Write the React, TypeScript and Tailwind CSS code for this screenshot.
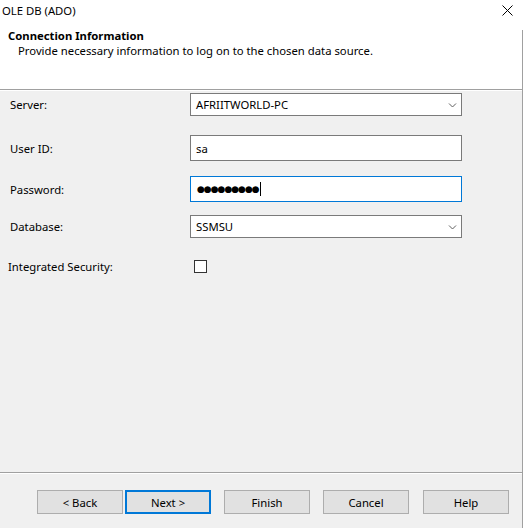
import React from 'react'

function Chevron() {
  return (
    <svg width="9" height="6" viewBox="0 0 9 6" className="mr-[4px]">
      <path d="M1 1.5 L4.5 5 L8 1.5" fill="none" stroke="#606060" strokeWidth="1" />
    </svg>
  )
}

function Combo({ value }: { value: string }) {
  return (
    <div className="w-[272px] h-[23px] bg-white border border-[#7a7a7a] flex items-center justify-between pl-[5px]">
      <span>{value}</span>
      <Chevron />
    </div>
  )
}

function Label({ text }: { text: string }) {
  return <div className="w-[190px] pl-[10px]">{text}</div>
}

export default function App() {
  const buttons = [
    { label: '< Back', cls: 'ml-[37px] border border-[#adadad]' },
    { label: 'Next >', cls: 'ml-[2px] border-2 border-[#0078d7]' },
    { label: 'Finish', cls: 'ml-[13px] border border-[#adadad]' },
    { label: 'Cancel', cls: 'ml-[13px] border border-[#adadad]' },
    { label: 'Help', cls: 'ml-[14px] border border-[#adadad]' },
  ]

  return (
    <div className="w-[524px] h-[528px] flex bg-white text-[11.3px] text-black font-['Noto_Sans',sans-serif] leading-[15px]">
      <div className="w-[522px] flex flex-col">
        {/* Header */}
        <div className="h-[89px] bg-white flex flex-col">
          <div className="h-[21px] flex items-center justify-between pl-[2px] pr-[9px]">
            <span>OLE DB (ADO)</span>
            <svg width="11" height="11" viewBox="0 0 11 11">
              <path d="M0.5 0.5 L10.5 10.5 M10.5 0.5 L0.5 10.5" stroke="#000" strokeWidth="1" />
            </svg>
          </div>
          <div className="pl-[8px] mt-[7px] h-[15px] font-bold">Connection Information</div>
          <div className="pl-[18px] h-[15px]">Provide necessary information to log on to the chosen data source.</div>
        </div>
        <div className="h-px bg-[#a0a0a0]" />
        <div className="h-px bg-white" />

        {/* Body */}
        <div className="flex-1 bg-[#f0f0f0] flex flex-col">
          <div className="mt-[2px] flex items-center">
            <Label text="Server:" />
            <Combo value="AFRIITWORLD-PC" />
          </div>
          <div className="mt-[19px] flex items-center">
            <Label text="User ID:" />
            <div className="w-[272px] h-[26px] bg-white border border-[#7a7a7a] flex items-center pl-[5px]">sa</div>
          </div>
          <div className="mt-[15px] flex items-center">
            <Label text="Password:" />
            <div className="w-[272px] h-[26px] bg-white border border-[#0078d7] flex items-center pl-[6px]">
              <span className="font-['DejaVu_Sans',sans-serif] text-[9px] tracking-[-1px]">●●●●●●●●●</span>
              <span className="ml-[1px] w-px h-[14px] bg-black" />
            </div>
          </div>
          <div className="mt-[13px] flex items-center">
            <Label text="Database:" />
            <Combo value="SSMSU" />
          </div>
          <div className="mt-[21px] flex items-center">
            <div className="w-[194px] pl-[8px]">Integrated Security:</div>
            <div className="w-[13px] h-[13px] border border-[#333] bg-white" />
          </div>
        </div>

        <div className="h-px bg-[#a0a0a0]" />
        <div className="h-px bg-white" />

        {/* Footer */}
        <div className="h-[54px] bg-[#f0f0f0] flex items-start pt-[16px]">
          {buttons.map((b) => (
            <button
              key={b.label}
              className={`w-[86px] h-[24px] bg-[#e1e1e1] flex items-center justify-center ${b.cls}`}
            >
              {b.label}
            </button>
          ))}
        </div>
      </div>
      <div className="w-[2px] flex flex-col">
        <div className="h-[30px] bg-white" />
        <div className="flex-1 border-l border-[#a0a0a0] bg-white" />
      </div>
    </div>
  )
}
